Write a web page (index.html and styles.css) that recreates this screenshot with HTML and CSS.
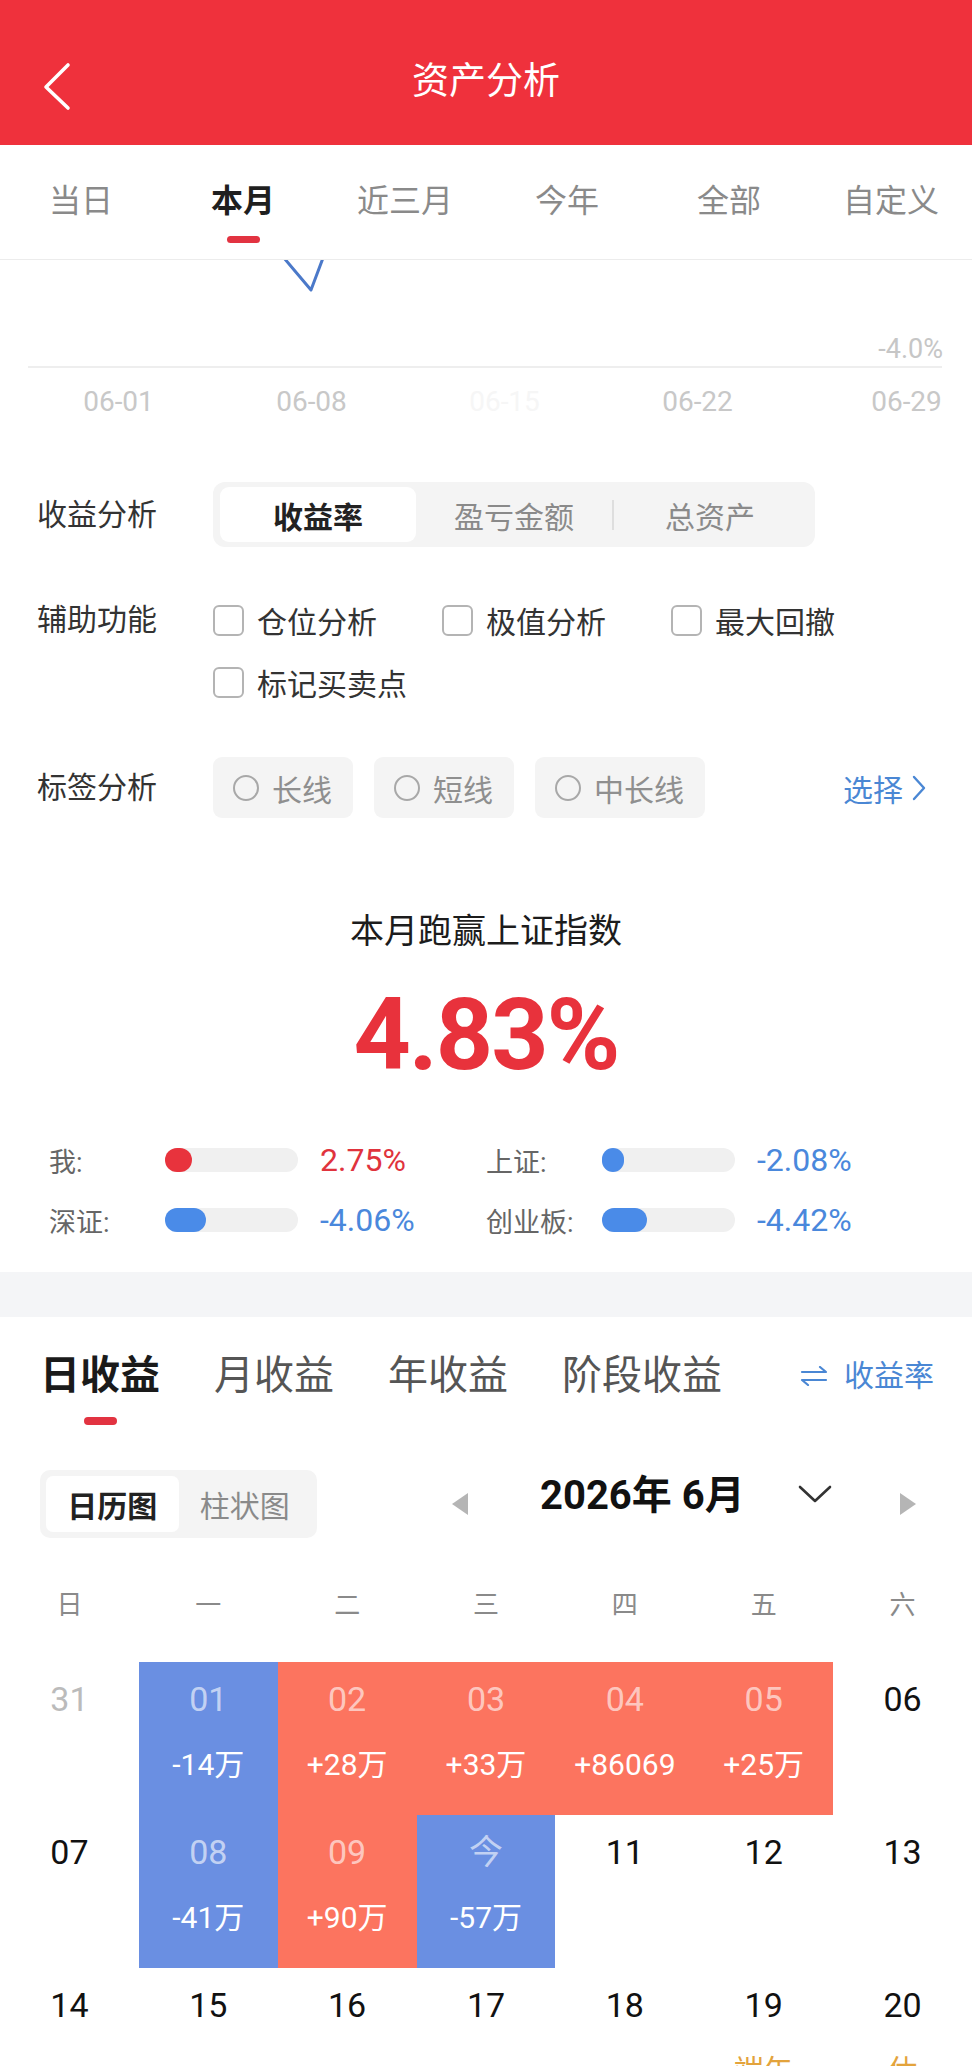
FILE: index.html
```html
<!DOCTYPE html>
<html lang="zh-CN">
<head>
<meta charset="utf-8">
<title>资产分析</title>
<link rel="stylesheet" href="styles.css">
</head>
<body>
<div class="page">
  <header class="topbar">
    <div class="back">
      <svg width="30" height="50" viewBox="0 0 30 50"><polyline points="26,4 4,26 26,47" fill="none" stroke="#fff" stroke-width="3.6" stroke-linecap="round" stroke-linejoin="round"/></svg>
    </div>
    <h1 class="title">资产分析</h1>
    <div></div>
  </header>

  <nav class="period-tabs">
    <div class="ptab"><span>当日</span></div>
    <div class="ptab active"><span>本月</span><i class="bar"></i></div>
    <div class="ptab"><span>近三月</span></div>
    <div class="ptab"><span>今年</span></div>
    <div class="ptab"><span>全部</span></div>
    <div class="ptab"><span>自定义</span></div>
  </nav>

  <section class="chart">
    <div class="plot">
      <svg class="line" width="972" height="106" viewBox="0 0 972 106"><polyline points="284,-2 311,30 323,-2" fill="none" stroke="#4b79c9" stroke-width="3" stroke-linejoin="round"/></svg>
      <span class="ylabel">-4.0%</span>
    </div>
    <div class="axis"></div>
    <div class="xlabels">
      <span>06-01</span><span>06-08</span><span class="faded">06-15</span><span>06-22</span><span class="last">06-29</span>
    </div>
  </section>

  <section class="options">
    <div class="opt-row">
      <div class="opt-label">收益分析</div>
      <div class="seg">
        <div class="seg-item active">收益率</div>
        <div class="seg-item">盈亏金额</div>
        <div class="seg-item sep">总资产</div>
      </div>
    </div>
    <div class="opt-row r2">
      <div class="opt-label">辅助功能</div>
      <div class="checks">
        <label class="check"><i class="box"></i>仓位分析</label>
        <label class="check"><i class="box"></i>极值分析</label>
        <label class="check"><i class="box"></i>最大回撤</label>
        <label class="check"><i class="box"></i>标记买卖点</label>
      </div>
    </div>
    <div class="opt-row r3">
      <div class="opt-label">标签分析</div>
      <div class="chips">
        <div class="chip"><i class="radio"></i>长线</div>
        <div class="chip"><i class="radio"></i>短线</div>
        <div class="chip"><i class="radio"></i>中长线</div>
      </div>
      <div class="pick">选择<svg width="16" height="26" viewBox="0 0 16 26"><polyline points="3,2 13,13 3,24" fill="none" stroke="#4a87d4" stroke-width="2.4" stroke-linecap="round" stroke-linejoin="round"/></svg></div>
    </div>
  </section>

  <section class="summary">
    <div class="sum-title">本月跑赢上证指数</div>
    <div class="sum-value">4.83%</div>
    <div class="stats">
      <div class="stat"><span class="s-label">我:</span><span class="track"><i class="fill red" style="width:27px"></i></span><span class="s-val red-t">2.75%</span></div>
      <div class="stat"><span class="s-label">上证:</span><span class="track"><i class="fill blue" style="width:22px"></i></span><span class="s-val blue-t">-2.08%</span></div>
      <div class="stat"><span class="s-label">深证:</span><span class="track"><i class="fill blue" style="width:41px"></i></span><span class="s-val blue-t">-4.06%</span></div>
      <div class="stat"><span class="s-label">创业板:</span><span class="track"><i class="fill blue" style="width:45px"></i></span><span class="s-val blue-t">-4.42%</span></div>
    </div>
  </section>

  <div class="band"></div>

  <section class="income">
    <div class="income-tabs">
      <div class="itab active"><span>日收益</span><i class="bar"></i></div>
      <div class="itab"><span>月收益</span></div>
      <div class="itab"><span>年收益</span></div>
      <div class="itab"><span>阶段收益</span></div>
      <div class="toggle-rate">
        <svg width="28" height="20" viewBox="0 0 28 20"><path d="M2 6 H26 L20 1 M26 14 H2 L8 19" fill="none" stroke="#4a87d4" stroke-width="2.2" stroke-linecap="round" stroke-linejoin="round"/></svg>
        <span>收益率</span>
      </div>
    </div>

    <div class="cal-head">
      <div class="view-toggle">
        <div class="view-item active">日历图</div>
        <div class="view-item">柱状图</div>
      </div>
      <i class="tri-left"></i>
      <div class="month">2026年 6月</div>
      <svg class="chev" width="36" height="20" viewBox="0 0 36 20"><polyline points="3,3 18,17 33,3" fill="none" stroke="#333" stroke-width="2.6" stroke-linecap="round" stroke-linejoin="round"/></svg>
      <i class="tri-right"></i>
    </div>

    <div class="weekdays">
      <span>日</span><span>一</span><span>二</span><span>三</span><span>四</span><span>五</span><span>六</span>
    </div>

    <div class="cal">
      <div class="day muted"><span class="d">31</span></div>
      <div class="day down"><span class="d">01</span><span class="v">-14万</span></div>
      <div class="day up"><span class="d">02</span><span class="v">+28万</span></div>
      <div class="day up"><span class="d">03</span><span class="v">+33万</span></div>
      <div class="day up"><span class="d">04</span><span class="v">+86069</span></div>
      <div class="day up"><span class="d">05</span><span class="v">+25万</span></div>
      <div class="day"><span class="d">06</span></div>

      <div class="day"><span class="d">07</span></div>
      <div class="day down"><span class="d">08</span><span class="v">-41万</span></div>
      <div class="day up"><span class="d">09</span><span class="v">+90万</span></div>
      <div class="day down"><span class="d">今</span><span class="v">-57万</span></div>
      <div class="day"><span class="d">11</span></div>
      <div class="day"><span class="d">12</span></div>
      <div class="day"><span class="d">13</span></div>

      <div class="day"><span class="d">14</span></div>
      <div class="day"><span class="d">15</span></div>
      <div class="day"><span class="d">16</span></div>
      <div class="day"><span class="d">17</span></div>
      <div class="day"><span class="d">18</span></div>
      <div class="day"><span class="d">19</span><span class="tag">端午</span></div>
      <div class="day"><span class="d">20</span><span class="tag">休</span></div>
    </div>
  </section>
</div>
</body>
</html>
```
FILE: styles.css
```css
html, body {
  margin: 0;
  padding: 0;
  background: #fff;
}
body {
  width: 972px;
  overflow-x: hidden;
  font-family: Roboto, "Noto Sans CJK SC", sans-serif;
  color: #222;
}
.page {
  width: 972px;
}

/* header */
.topbar {
  height: 145px;
  box-sizing: border-box;
  padding-top: 19px;
  background: #ef313c;
  display: grid;
  grid-template-columns: 1fr auto 1fr;
  align-items: center;
}
.back {
  padding-left: 42px;
  display: flex;
}
.back svg {
  margin-top: 8px;
}
.title {
  margin: 0;
  font-size: 37px;
  font-weight: 400;
  line-height: 50px;
  color: #fff;
}

/* period tabs */
.period-tabs {
  display: flex;
  height: 114px;
  border-bottom: 1px solid #ececec;
}
.ptab {
  flex: 1;
  display: flex;
  flex-direction: column;
  align-items: center;
  padding-top: 37px;
  font-size: 32px;
  line-height: 38px;
  color: #8a8a8a;
}
.ptab.active {
  color: #1f1f1f;
  font-weight: 700;
}
.bar {
  display: block;
  width: 33px;
  height: 7px;
  border-radius: 4px;
  background: #e23341;
  margin-top: 16px;
}

/* chart */
.plot {
  position: relative;
  height: 106px;
  overflow: hidden;
  display: flex;
  align-items: flex-end;
  justify-content: flex-end;
  padding-right: 29px;
  box-sizing: border-box;
}
.plot .line {
  position: absolute;
  left: 0;
  top: 0;
}
.ylabel {
  font-size: 27px;
  line-height: 30px;
  color: #c6c6c6;
  margin-bottom: 2px;
  white-space: nowrap;
}
.axis {
  height: 2px;
  background: #eeeeee;
  margin: 0 30px 0 28px;
}
.xlabels {
  display: flex;
  gap: 120px;
  padding: 18px 29px 0 82px;
}
.xlabels span {
  width: 73px;
  flex: none;
  display: flex;
  justify-content: center;
  white-space: nowrap;
  font-size: 28px;
  line-height: 32px;
  color: #c8c8c8;
}
.xlabels .faded {
  color: #f6f6f6;
}
.xlabels .last {
  margin-left: auto;
}

/* options */
.options {
  padding: 64px 0 0 37px;
}
.opt-row {
  display: flex;
  align-items: center;
}
.opt-label {
  width: 176px;
  flex: none;
  font-size: 30px;
  line-height: 40px;
  color: #333;
}
.seg {
  display: flex;
  width: 602px;
  height: 65px;
  box-sizing: border-box;
  padding: 5px 7px;
  background: #f4f4f4;
  border-radius: 12px;
}
.seg-item {
  flex: 1;
  position: relative;
  display: flex;
  align-items: center;
  justify-content: center;
  font-size: 30px;
  color: #8a8a8a;
}
.seg-item.active {
  background: #fff;
  border-radius: 9px;
  color: #222;
  font-weight: 700;
}
.seg-item.sep::before {
  content: "";
  position: absolute;
  left: 0;
  top: 13px;
  bottom: 12px;
  width: 2px;
  background: #dedede;
}
.r2 {
  align-items: flex-start;
  margin-top: 42px;
}
.r2 .opt-label {
  line-height: 62px;
}
.checks {
  display: flex;
  flex-wrap: wrap;
  width: 687px;
}
.check {
  width: 229px;
  height: 62px;
  display: flex;
  align-items: center;
  font-size: 30px;
  color: #333;
}
.box {
  width: 27px;
  height: 27px;
  border: 2px solid #b4b4b4;
  border-radius: 6px;
  margin-right: 13px;
  flex: none;
}
.r3 {
  margin-top: 44px;
}
.chips {
  display: flex;
  gap: 21px;
}
.chip {
  height: 61px;
  display: flex;
  align-items: center;
  padding: 0 21px 0 20px;
  background: #f4f4f4;
  border-radius: 9px;
  font-size: 30px;
  color: #8f8f8f;
}
.radio {
  width: 22px;
  height: 22px;
  border: 2px solid #a8a8a8;
  border-radius: 50%;
  margin-right: 13px;
  flex: none;
}
.pick {
  margin-left: auto;
  margin-right: 45px;
  display: flex;
  align-items: center;
  gap: 8px;
  font-size: 30px;
  color: #4a87d4;
}

/* summary */
.summary {
  padding-top: 91px;
  text-align: center;
}
.sum-title {
  font-size: 34px;
  line-height: 44px;
  font-weight: 400;
  color: #1c1c1c;
}
.sum-value {
  margin-top: 27px;
  font-size: 100px;
  line-height: 110px;
  font-weight: 700;
  color: #e8323c;
  letter-spacing: -2px;
}
.stats {
  display: grid;
  grid-template-columns: 437px 1fr;
  row-gap: 20px;
  padding: 50px 0 32px 49px;
  text-align: left;
}
.stat {
  display: flex;
  align-items: center;
  height: 40px;
}
.s-label {
  width: 116px;
  flex: none;
  font-size: 27px;
  color: #666;
}
.track {
  width: 133px;
  height: 24px;
  flex: none;
  border-radius: 12px;
  background: #f0f0f0;
  display: flex;
}
.fill {
  display: block;
  height: 24px;
  border-radius: 12px;
}
.fill.red { background: #e8333d; }
.fill.blue { background: #4a8be8; }
.s-val {
  margin-left: 22px;
  font-size: 32px;
  line-height: 40px;
}
.red-t { color: #e0333d; }
.blue-t { color: #4a88dc; }

.band {
  height: 45px;
  background: #f4f5f7;
}

/* income */
.income-tabs {
  display: flex;
  align-items: flex-start;
  padding: 34px 38px 0 40px;
}
.itab {
  display: flex;
  flex-direction: column;
  align-items: center;
  margin-right: 54px;
  font-size: 40px;
  line-height: 50px;
  color: #555;
}
.itab.active {
  font-weight: 700;
  color: #1a1a1a;
}
.itab .bar {
  height: 8px;
}
.toggle-rate {
  margin-left: auto;
  display: flex;
  align-items: center;
  gap: 16px;
  font-size: 30px;
  line-height: 50px;
  color: #4a87d4;
}

.cal-head {
  display: flex;
  align-items: center;
  margin-top: 45px;
  padding-left: 40px;
}
.view-toggle {
  display: flex;
  width: 277px;
  height: 68px;
  box-sizing: border-box;
  padding: 6px;
  background: #f4f4f4;
  border-radius: 10px;
}
.view-item {
  flex: 1;
  display: flex;
  align-items: center;
  justify-content: center;
  font-size: 30px;
  color: #8a8a8a;
}
.view-item.active {
  background: #fff;
  border-radius: 7px;
  color: #222;
  font-weight: 700;
}
.tri-left {
  width: 0;
  height: 0;
  margin-left: 135px;
  border-top: 11px solid transparent;
  border-bottom: 11px solid transparent;
  border-right: 16px solid #b5b5b5;
}
.month {
  margin-left: 72px;
  margin-bottom: 16px;
  font-size: 40px;
  line-height: 50px;
  font-weight: 700;
  color: #111;
}
.chev {
  margin-left: 52px;
  margin-bottom: 20px;
}
.tri-right {
  width: 0;
  height: 0;
  margin-left: 67px;
  border-top: 11px solid transparent;
  border-bottom: 11px solid transparent;
  border-left: 16px solid #b5b5b5;
}

.weekdays {
  display: grid;
  grid-template-columns: repeat(7, 1fr);
  margin-top: 42px;
  text-align: center;
  font-size: 26px;
  line-height: 50px;
  color: #8a8a8a;
}
.cal {
  display: grid;
  grid-template-columns: repeat(7, 1fr);
  grid-auto-rows: 153px;
  margin-top: 32px;
}
.day {
  display: flex;
  flex-direction: column;
  align-items: center;
  padding-top: 17px;
  box-sizing: border-box;
}
.day .d {
  font-size: 34px;
  line-height: 40px;
  color: #111;
}
.day.muted .d {
  color: #bbbbbb;
}
.day .v {
  margin-top: 26px;
  font-size: 30px;
  line-height: 40px;
  color: #fff;
}
.day.up { background: #fc745f; }
.day.down { background: #6a8fe2; }
.day.up .d, .day.down .d {
  color: rgba(255, 255, 255, 0.62);
}
.day .tag {
  margin-top: 26px;
  font-size: 30px;
  line-height: 40px;
  color: #e3a33c;
}
```
